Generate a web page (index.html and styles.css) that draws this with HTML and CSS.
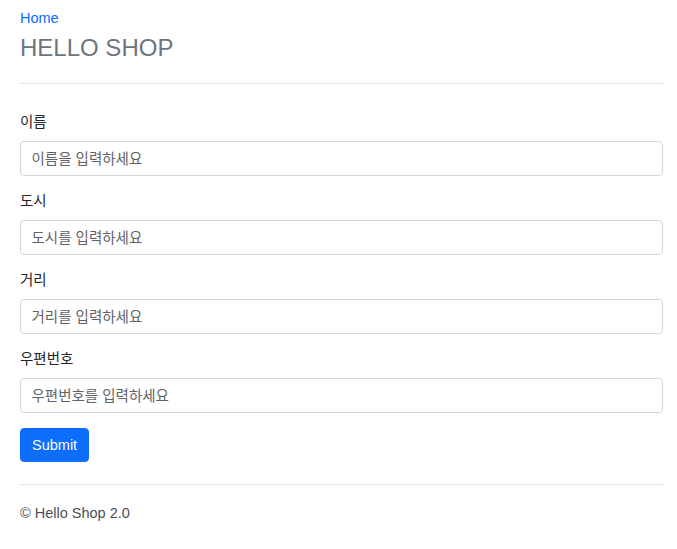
FILE: index.html
```html
<!DOCTYPE html>
<html lang="ko">
<head>
<meta charset="utf-8">
<title>HELLO SHOP</title>
<link rel="stylesheet" href="styles.css">
</head>
<body>
<div class="container">
  <header class="header">
    <a class="home" href="#">Home</a>
    <h1 class="title">HELLO SHOP</h1>
  </header>
  <hr class="divider">
  <form class="form">
    <div class="group">
      <label class="label" for="name">이름</label>
      <input class="input" id="name" type="text" placeholder="이름을 입력하세요">
    </div>
    <div class="group">
      <label class="label" for="city">도시</label>
      <input class="input" id="city" type="text" placeholder="도시를 입력하세요">
    </div>
    <div class="group">
      <label class="label" for="street">거리</label>
      <input class="input" id="street" type="text" placeholder="거리를 입력하세요">
    </div>
    <div class="group">
      <label class="label" for="zip">우편번호</label>
      <input class="input" id="zip" type="text" placeholder="우편번호를 입력하세요">
    </div>
    <button class="btn" type="button">Submit</button>
  </form>
  <hr class="divider footer-divider">
  <footer class="footer">© Hello Shop 2.0</footer>
</div>
</body>
</html>
```

FILE: styles.css
```css
* { box-sizing: border-box; }
html, body { margin: 0; padding: 0; background: #fff; }
body {
  font-family: "Liberation Sans", "Noto Sans CJK KR", Arial, sans-serif;
  font-size: 14.5px;
  line-height: 1.5;
  color: #212529;
}
.container {
  padding: 8px 14px 0 20px;
}
.header { display: flex; flex-direction: column; }
.home {
  color: #0d6efd;
  text-decoration: none;
  font-size: 14.5px;
  line-height: 21px;
}
.title {
  margin: 4px 0 0;
  font-size: 24px;
  font-weight: 400;
  line-height: 29px;
  color: #6c757d;
}
.divider {
  margin: 21px 0 0;
  border: 0;
  border-top: 1px solid #e3e3e3;
  height: 0;
}
.form { margin-top: 28px; display: flex; flex-direction: column; align-items: flex-start; }
.group { display: flex; flex-direction: column; width: 100%; margin-bottom: 15px; }
.label {
  font-size: 14.5px;
  line-height: 21px;
  margin-bottom: 8px;
  color: #212529;
}
.input {
  width: 100%;
  height: 35px;
  padding: 0 10.5px;
  font-family: inherit;
  font-size: 14.5px;
  color: #212529;
  border: 1px solid #d4d7da;
  border-radius: 4px;
  background: #fff;
  outline: none;
}
.input::placeholder { color: #5f6368; opacity: 1; }
.btn {
  height: 34px;
  padding: 0 11px;
  font-family: inherit;
  font-size: 14.5px;
  color: #fff;
  background: #0d6efd;
  border: 1px solid #0d6efd;
  border-radius: 4px;
  cursor: pointer;
}
.footer-divider { margin-top: 22px; }
.footer {
  margin-top: 18px;
  font-size: 14.5px;
  line-height: 21px;
  color: #495057;
}
```
